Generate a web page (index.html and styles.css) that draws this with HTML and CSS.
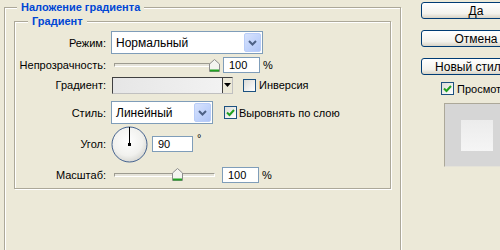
FILE: index.html
```html
<!DOCTYPE html>
<html lang="ru">
<head>
  <meta charset="UTF-8">
  <title>Стиль слоя — Наложение градиента</title>
  <link rel="stylesheet" href="styles.css">
</head>
<body>
  <div class="dialog">
    <fieldset class="group outer">
      <legend>Наложение градиента</legend>

      <fieldset class="group inner">
        <legend>Градиент</legend>

        <div class="row r-mode">
          <span class="lbl">Режим:</span>
          <div class="select sel-mode"><span class="val">Нормальный</span><span class="drop"><svg width="9" height="6" viewBox="0 0 9 6"><path d="M1 1l3.5 3.5L8 1" fill="none" stroke="#4d6185" stroke-width="2"/></svg></span></div>
        </div>

        <div class="row r-opacity">
          <span class="lbl">Непрозрачность:</span>
          <div class="slider">
            <div class="track"></div>
            <!-- thumb position from value -->
            <svg class="thumb" style="left: 95px" width="11" height="13" viewBox="0 0 11 13"><path d="M0.5 12.5V5L5.5 0.5L10.5 5V12.5Z" fill="#f4f4f0" stroke="#8d8d8d"/><path d="M1 11.5H10" stroke="#21a121" stroke-width="2"/></svg>
          </div>
          <div class="num w-37">100</div>
          <span class="unit">%</span>
        </div>

        <div class="row r-grad">
          <span class="lbl">Градиент:</span>
          <div class="swatch"><span class="fill"></span><span class="arrow"><svg width="7" height="4" viewBox="0 0 7 4"><path d="M0 0h7L3.5 4z" fill="#000"/></svg></span></div>
          <span class="check c-inv"></span>
          <span class="ctext">Инверсия</span>
        </div>

        <div class="row r-style">
          <span class="lbl">Стиль:</span>
          <div class="select sel-style"><span class="val">Линейный</span><span class="drop"><svg width="9" height="6" viewBox="0 0 9 6"><path d="M1 1l3.5 3.5L8 1" fill="none" stroke="#4d6185" stroke-width="2"/></svg></span></div>
          <span class="check on c-align"><svg width="11" height="11" viewBox="0 0 11 11"><path d="M2 5.5l2.5 2.5L9 3" fill="none" stroke="#21a121" stroke-width="2"/></svg></span>
          <span class="ctext">Выровнять по слою</span>
        </div>

        <div class="row r-angle">
          <span class="lbl">Угол:</span>
          <svg class="dial" width="37" height="37" viewBox="0 0 37 37">
            <defs>
              <radialGradient id="dg" cx="45%" cy="40%" r="60%">
                <stop offset="0" stop-color="#ffffff"/>
                <stop offset="0.7" stop-color="#f1f1ee"/>
                <stop offset="1" stop-color="#d9d9d4"/>
              </radialGradient>
            </defs>
            <circle cx="18.5" cy="18.5" r="17.5" fill="url(#dg)" stroke="#44628f"/>
            <path d="M18.5 18.5V1" stroke="#000"/>
            <rect x="17" y="17" width="3" height="3" fill="#000"/>
          </svg>
          <div class="num w-41">90</div>
          <span class="deg">°</span>
        </div>

        <div class="row r-scale">
          <span class="lbl">Масштаб:</span>
          <div class="slider">
            <div class="track"></div>
            <svg class="thumb" style="left: 58px" width="11" height="13" viewBox="0 0 11 13"><path d="M0.5 12.5V5L5.5 0.5L10.5 5V12.5Z" fill="#f4f4f0" stroke="#8d8d8d"/><path d="M1 11.5H10" stroke="#21a121" stroke-width="2"/></svg>
          </div>
          <div class="num w-37 n-scale">100</div>
          <span class="unit">%</span>
        </div>
      </fieldset>
    </fieldset>

    <div class="side">
      <button class="btn">Да</button>
      <button class="btn">Отмена</button>
      <button class="btn">Новый стиль...</button>
      <div class="preview-row">
        <span class="check on"><svg width="11" height="11" viewBox="0 0 11 11"><path d="M2 5.5l2.5 2.5L9 3" fill="none" stroke="#21a121" stroke-width="2"/></svg></span>
        <span class="ctext">Просмотр</span>
      </div>
      <div class="preview"><span class="sample"></span></div>
    </div>
  </div>
</body>
</html>
```

FILE: styles.css
```css
body {
  margin: 0;
  background-color: #ece9d8;
  font-family: "Liberation Sans", Arial, sans-serif;
  font-size: 11px;
  color: #000;
  overflow: hidden;
}
.dialog {
  display: flex;
  align-items: flex-start;
  height: 250px;
  overflow: hidden;
  padding-left: 4px;
  gap: 20px;
}

/* etched group boxes */
.group {
  margin: 0;
  padding: 0;
  border: 1px solid #aca899;
  box-shadow: inset 1px 1px 0 #fff, 1px 1px 0 #fff;
  min-width: 0;
  box-sizing: border-box;
}
.group legend {
  background-color: #ece9d8;
  color: #0046d5;
  font-weight: bold;
  line-height: 13px;
  padding: 0 4px;
}
.outer {
  flex: none;
  width: 397px;
  height: 270px;
  margin-top: 1px;
}
.outer > legend {
  margin-left: 12px;
}
.inner {
  width: 377px;
  margin: 1px 0 0 9px;
  padding: 3px 0 5px 0;
}
.inner > legend {
  margin-left: 13px;
}

/* rows */
.row {
  display: flex;
  align-items: center;
}
.lbl {
  width: 91px;
  margin-right: 5px;
  text-align: right;
  white-space: nowrap;
}
.r-mode { height: 23px; }
.r-opacity { height: 18px; margin-top: 2px; }
.r-grad { height: 18px; margin-top: 2px; }
.r-style { height: 23px; margin-top: 7px; }
.r-angle { height: 36px; margin-top: 2px; }
.r-scale { height: 17px; margin-top: 4px; }

/* combo boxes */
.select {
  display: flex;
  align-items: center;
  height: 23px;
  box-sizing: border-box;
  border: 1px solid #7f9db9;
  background-color: #fff;
  padding: 1px;
}
.select .val {
  flex: 1;
  padding-left: 3px;
  font-size: 12px;
}
.select .drop {
  width: 17px;
  height: 19px;
  box-sizing: border-box;
  border: 1px solid #b9cdf8;
  border-radius: 2px;
  background: linear-gradient(135deg, #d7e2fc 0%, #c1d3fb 55%, #b0c5f6 100%);
  display: flex;
  align-items: center;
  justify-content: center;
}
.sel-mode { width: 152px; }
.sel-style { width: 102px; }

/* sliders */
.slider {
  position: relative;
  width: 104px;
  height: 17px;
  margin-left: 3px;
  display: flex;
  align-items: center;
}
.track {
  width: 101px;
  height: 4px;
  box-sizing: border-box;
  border: 1px solid;
  border-color: #9d9b90 #fff #fff #9d9b90;
  background-color: #e6e4da;
}
.thumb {
  position: absolute;
  top: 2px;
}

/* number fields */
.num {
  height: 16px;
  box-sizing: border-box;
  border: 1px solid #7f9db9;
  background-color: #fff;
  padding: 0 5px;
  line-height: 14px;
}
.w-37 { width: 37px; margin-left: 5px; }
.w-41 { width: 41px; margin-left: 4px; }
.n-scale { margin-left: 4px; }
.unit { margin-left: 3px; }
.deg {
  margin-left: 4px;
  align-self: flex-start;
  margin-top: 6px;
}

/* gradient picker */
.swatch {
  display: flex;
  width: 121px;
  height: 17px;
  margin-left: 1px;
  box-sizing: border-box;
  border: 1px solid;
  border-color: #404040 #c0c0c0 #c0c0c0 #404040;
  background-color: #fff;
}
.swatch .fill {
  flex: 1;
  background: linear-gradient(90deg, #e6e6e6, #f2f2f2);
}
.swatch .arrow {
  width: 9px;
  border-left: 1px solid #404040;
  display: flex;
  align-items: center;
  justify-content: center;
  background-color: #ece9d8;
}

/* check boxes */
.check {
  width: 13px;
  height: 13px;
  box-sizing: border-box;
  border: 1px solid #1c5180;
  background: linear-gradient(135deg, #dcdcd7, #fff);
  display: inline-flex;
  align-items: center;
  justify-content: center;
  flex: none;
}
.ctext { margin-left: 3px; white-space: nowrap; }
.c-inv { margin-left: 10px; }
.c-align { margin-left: 11px; }
.r-style .ctext { margin-left: 2px; }

.dial { margin-left: 0; }

/* right column */
.side {
  display: flex;
  flex-direction: column;
  width: 110px;
  flex: none;
}
.btn {
  height: 17px;
  margin-top: 11px;
  padding: 0;
  border: 1px solid #003c74;
  border-radius: 3px;
  background: linear-gradient(#fff, #f3f2ec 70%, #d8d3c5);
  font-family: inherit;
  font-size: 12px;
  line-height: 14px;
  color: #000;
}
.btn:first-child { margin-top: 2px; }
.preview-row {
  display: flex;
  align-items: center;
  margin: 7px 0 0 20px;
}
.preview {
  width: 65px;
  height: 64px;
  margin: 8px 0 0 23px;
  box-sizing: border-box;
  border: 1px solid;
  border-color: #aca899 #e4e2d8 #e4e2d8 #aca899;
  background-color: #d6d6d6;
  display: flex;
  align-items: center;
  justify-content: center;
}
.sample {
  width: 32px;
  height: 31px;
  background: linear-gradient(#ececec, #f5f5f5);
}
```
